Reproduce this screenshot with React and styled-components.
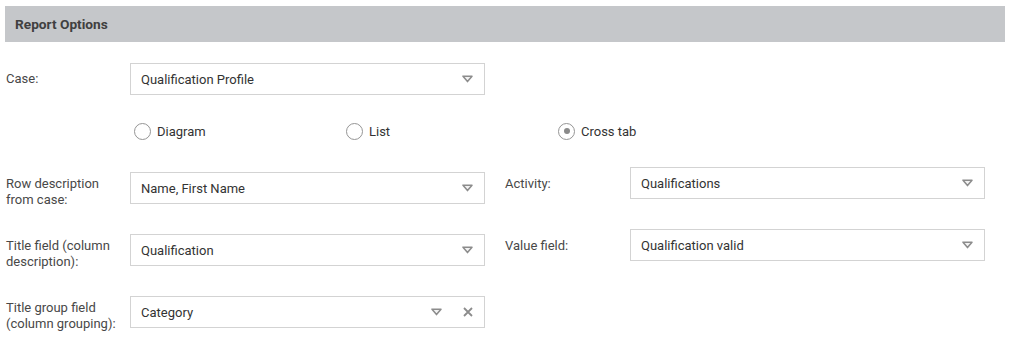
import * as React from "react"
import styled, { createGlobalStyle } from "styled-components"

const GlobalStyle = createGlobalStyle`
  body {
    margin: 0;
    background: #fff;
    font-family: Roboto, "Liberation Sans", Arial, sans-serif;
    font-size: 13px;
    color: #333;
  }
`

const Panel = styled.div`
  padding: 6px 5px 0;
  width: 1000px;
`

const Header = styled.div`
  height: 36px;
  line-height: 36px;
  padding-left: 10px;
  background: #c5c7ca;
  color: #404040;
  font-weight: bold;
  font-size: 13.7px;
`

const Form = styled.div`
  padding-left: 1px;
`

const CaseRow = styled.div`
  display: flex;
  align-items: center;
  margin-top: 21px;
`

const Label = styled.div`
  width: ${p => p.$width || 124}px;
  flex-shrink: 0;
  line-height: 16px;
  color: #484848;
  padding-top: ${p => p.$pad || 0}px;
`

const SelectBox = styled.div`
  box-sizing: border-box;
  width: 355px;
  height: 32px;
  margin-top: ${p => p.$drop || 0}px;
  border: 1px solid #d3d3d3;
  background: #fff;
  display: flex;
  align-items: center;
  padding: 0 11px 0 10px;
  color: #333;
`

const Value = styled.span`
  flex: 1;
`

const Icons = styled.div`
  display: flex;
  align-items: center;
  gap: 21px;
`

const RadioRow = styled.div`
  margin: 24px 0 0 124px;
  height: 24px;
  display: grid;
  grid-template-columns: repeat(3, 212px);
  align-items: center;
`

const RadioItem = styled.label`
  display: flex;
  align-items: center;
  gap: 6px;
  padding-left: 4px;
  color: #333;
`

const Circle = styled.span`
  box-sizing: border-box;
  width: 17px;
  height: 17px;
  border: 1.5px solid #959595;
  border-radius: 50%;
  display: flex;
  align-items: center;
  justify-content: center;

  &::after {
    content: "";
    width: 6px;
    height: 6px;
    border-radius: 50%;
    background: ${p => (p.$checked ? "#8a8a8a" : "transparent")};
  }
`

const FieldGrid = styled.div`
  margin-top: 24px;
  display: grid;
  grid-template-columns: 479px 480px;
  column-gap: 20px;
  grid-auto-rows: 62px;
`

const Field = styled.div`
  display: flex;
  align-items: flex-start;
`

const Arrow = () => (
  <svg width="11" height="8" viewBox="0 0 11 8">
    <path d="M1 1.2 H10 L5.5 6.6 Z" fill="#f2f2f2" stroke="#8c8c8c" strokeWidth="1.5" strokeLinejoin="round" />
  </svg>
)

const Clear = () => (
  <svg width="10" height="10" viewBox="0 0 10 10">
    <path d="M1 1 L9 9 M9 1 L1 9" stroke="#8c8c8c" strokeWidth="1.8" />
  </svg>
)

const Select = ({ value, clearable, drop }) => (
  <SelectBox $drop={drop}>
    <Value>{value}</Value>
    <Icons>
      <Arrow />
      {clearable && <Clear />}
    </Icons>
  </SelectBox>
)

const Radio = ({ label, checked }) => (
  <RadioItem>
    <Circle $checked={checked} />
    {label}
  </RadioItem>
)

const fields = [
  { label: ["Row description", "from case:"], value: "Name, First Name", left: true },
  { label: ["Activity:"], value: "Qualifications" },
  { label: ["Title field (column", "description):"], value: "Qualification", left: true },
  { label: ["Value field:"], value: "Qualification valid" },
  { label: ["Title group field", "(column grouping):"], value: "Category", left: true, clearable: true },
]

export default function App() {
  return (
    <>
      <GlobalStyle />
      <Panel>
        <Header>Report Options</Header>
        <Form>
          <CaseRow>
            <Label>Case:</Label>
            <Select value="Qualification Profile" />
          </CaseRow>

          <RadioRow>
            <Radio label="Diagram" />
            <Radio label="List" />
            <Radio label="Cross tab" checked />
          </RadioRow>

          <FieldGrid>
            {fields.map((f, i) => (
              <Field key={i}>
                <Label $width={f.left ? 124 : 125} $pad={9}>
                  {f.label.map((l, j) => (
                    <div key={j}>{l}</div>
                  ))}
                </Label>
                <Select value={f.value} clearable={f.clearable} drop={f.left ? 5 : 0} />
              </Field>
            ))}
          </FieldGrid>
        </Form>
      </Panel>
    </>
  )
}
